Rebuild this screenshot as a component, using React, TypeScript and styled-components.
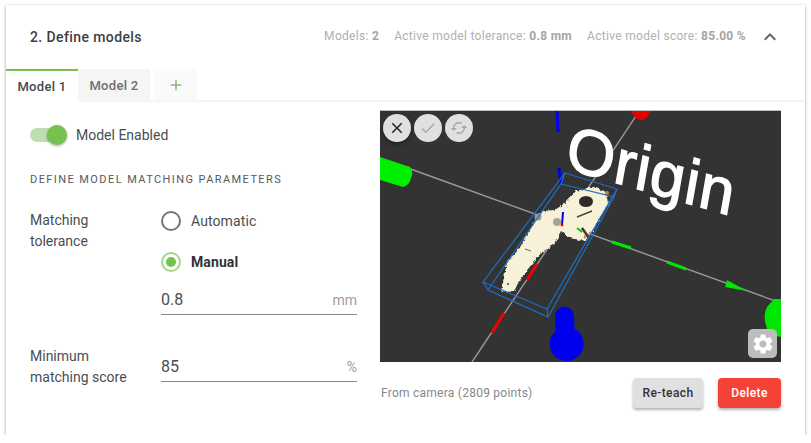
import * as React from 'react'
import styled, {createGlobalStyle} from 'styled-components'
import {MdAdd, MdCheck, MdClose, MdExpandLess, MdSettings, MdSync} from 'react-icons/md'

const GREEN = '#76c14f'

const GlobalStyle = createGlobalStyle`
  html, body {
    margin: 0;
    padding: 0;
    background: #fff;
    font-family: Roboto, "Liberation Sans", sans-serif;
  }
`

// Card and header
const Card = styled.div`
  box-sizing: border-box;
  width: 799px;
  height: 430px;
  margin: 5px 0 0 6px;
  background: #fff;
  box-shadow: 0 1px 3px rgba(0, 0, 0, 0.4);
  display: flex;
  flex-direction: column;
`

const Header = styled.header`
  height: 64px;
  flex: none;
  display: flex;
  align-items: flex-start;
  padding: 21px 23px 0 24px;
  box-sizing: border-box;
`

const Title = styled.h2`
  margin: 0;
  font-size: 14px;
  line-height: 23px;
  font-weight: 500;
  letter-spacing: 0.4px;
  color: #3c4043;
  flex: 1;
`

const Stats = styled.div`
  display: flex;
  gap: 15px;
  font-size: 12px;
  line-height: 20px;
  letter-spacing: 0.3px;
  color: #b0b0b0;
  margin-right: 12px;
`

const Stat = styled.span`
  & > b {
    font-weight: 700;
    color: #a5a5a5;
  }
`

const Chevron = styled(MdExpandLess)`
  width: 24px;
  height: 24px;
  color: #5f6368;
  margin-top: -1px;
`

// Tabs
const TabBar = styled.nav`
  height: 33px;
  flex: none;
  display: flex;
  box-sizing: border-box;
  border-bottom: 2px solid #f5f5f5;
`

const Tab = styled.div<{$active?: boolean}>`
  width: 72px;
  height: 33px;
  box-sizing: border-box;
  display: flex;
  align-items: center;
  justify-content: center;
  font-size: 13px;
  font-weight: 500;
  letter-spacing: 0.3px;
  color: ${({$active}) => ($active ? '#45494d' : '#6f6f6f')};
  background: ${({$active}) => ($active ? '#fff' : '#f5f5f5')};
  border-top: 2px solid ${({$active}) => ($active ? GREEN : '#f5f5f5')};
  position: relative;
  z-index: 1;
  & + & {
    height: 31px;
  }
`

const AddTab = styled.div`
  width: 43px;
  height: 31px;
  margin-left: 4px;
  background: #fafafa;
  display: flex;
  align-items: center;
  justify-content: center;
  color: #8db583;
  font-size: 18px;
`

// Body columns
const Body = styled.div`
  flex: 1;
  display: flex;
  padding: 8px 24px 0 24px;
`

const LeftColumn = styled.section`
  width: 327px;
  margin-right: 23px;
  display: flex;
  flex-direction: column;
`

const ToggleRow = styled.div`
  display: flex;
  align-items: center;
  gap: 9px;
  height: 32px;
  margin-top: 9px;
`

const Toggle = styled.div`
  width: 37px;
  height: 20px;
  position: relative;
  display: flex;
  align-items: center;
  &::before {
    content: '';
    width: 34px;
    height: 14px;
    border-radius: 7px;
    background: #bfe0ae;
  }
  &::after {
    content: '';
    position: absolute;
    right: 0;
    top: 0;
    width: 20px;
    height: 20px;
    border-radius: 50%;
    background: ${GREEN};
    box-shadow: 0 1px 3px rgba(0, 0, 0, 0.35);
  }
`

const BodyText = styled.span`
  font-size: 14px;
  line-height: 21px;
  color: #4a4e52;
`

const SectionTitle = styled.h3`
  margin: 21px 0 0;
  font-size: 11px;
  line-height: 16px;
  font-weight: 400;
  letter-spacing: 1.42px;
  text-transform: uppercase;
  color: #55595d;
`

const ParamGrid = styled.div`
  display: grid;
  grid-template-columns: 131px 196px;
  margin-top: 22px;
  row-gap: 31px;
`

const ParamLabel = styled(BodyText)`
  display: block;
`

const ParamControls = styled.div<{$top: number}>`
  display: flex;
  flex-direction: column;
  padding-top: ${({$top}) => $top}px;
`

const RadioRow = styled.label`
  display: flex;
  align-items: center;
  gap: 10px;
  height: 20px;
  margin-bottom: 21px;
`

const Radio = styled.span<{$checked?: boolean}>`
  width: 20px;
  height: 20px;
  box-sizing: border-box;
  border-radius: 50%;
  border: 2px solid ${({$checked}) => ($checked ? '#a5d58c' : '#757575')};
  display: flex;
  align-items: center;
  justify-content: center;
  &::after {
    content: '';
    width: 10px;
    height: 10px;
    border-radius: 50%;
    background: ${({$checked}) => ($checked ? GREEN : 'transparent')};
  }
`

const RadioText = styled.span<{$checked?: boolean}>`
  font-size: 14px;
  font-weight: ${({$checked}) => ($checked ? 700 : 400)};
  letter-spacing: 0.1px;
  color: ${({$checked}) => ($checked ? '#2f3235' : '#4a4e52')};
`

const Field = styled.div`
  height: 30px;
  box-sizing: border-box;
  border-bottom: 1px solid #8a8a8a;
  display: flex;
  align-items: center;
  justify-content: space-between;
  margin-top: -8px;
`

const FieldValue = styled.span`
  font-size: 16px;
  color: #4a4e52;
`

const FieldUnit = styled.span`
  font-size: 14px;
  color: #9e9e9e;
`

// Viewer
const RightColumn = styled.section`
  width: 401px;
  display: flex;
  flex-direction: column;
`

const Viewer = styled.div`
  position: relative;
  height: 252px;
  background: #333;
  border-top: 1px solid #bdbdbd;
  box-sizing: border-box;
`

const Scene = styled.svg`
  display: block;
  width: 401px;
  height: 251px;
`

const ViewerTools = styled.div`
  position: absolute;
  left: 3px;
  top: 3px;
  display: flex;
  gap: 3px;
`

const RoundTool = styled.span<{$disabled?: boolean}>`
  width: 28px;
  height: 28px;
  border-radius: 50%;
  background: #e0e0e0;
  display: flex;
  align-items: center;
  justify-content: center;
  color: ${({$disabled}) => ($disabled ? '#a8a8a8' : '#222')};
  font-size: 18px;
  box-shadow: ${({$disabled}) => ($disabled ? 'none' : '0 2px 5px rgba(0, 0, 0, 0.4)')};
`

const SyncIcon = styled(MdSync)`
  transform: rotate(90deg);
`

const SettingsButton = styled.span`
  position: absolute;
  right: 4px;
  bottom: 4px;
  width: 29px;
  height: 29px;
  border-radius: 5px;
  background: #bdbdbd;
  color: #fff;
  font-size: 24px;
  display: flex;
  align-items: center;
  justify-content: center;
`

const ViewerFooter = styled.div`
  display: flex;
  align-items: center;
  margin-top: 16px;
`

const Caption = styled.span`
  flex: 1;
  margin-left: 1px;
  font-size: 12px;
  letter-spacing: 0.25px;
  color: #85888b;
`

const ActionButton = styled.button<{$danger?: boolean}>`
  height: 30px;
  padding: 0;
  width: ${({$danger}) => ($danger ? '63px' : '70px')};
  margin-left: ${({$danger}) => ($danger ? '15px' : '0')};
  border: none;
  border-radius: 4px;
  font-family: inherit;
  font-size: 12px;
  font-weight: 500;
  letter-spacing: 0.4px;
  background: ${({$danger}) => ($danger ? '#f44336' : '#e0e0e0')};
  color: ${({$danger}) => ($danger ? '#fff' : '#333')};
  box-shadow: 0 2px 3px rgba(0, 0, 0, 0.3);
`

function SceneDrawing() {
  return (
    <Scene viewBox="380 111 401 251">
      <defs>
        <filter id="rough" x="-10%" y="-10%" width="120%" height="120%" colorInterpolationFilters="sRGB">
          <feTurbulence type="fractalNoise" baseFrequency="0.3" numOctaves="2" seed="4" result="noise" />
          <feDisplacementMap in="SourceGraphic" in2="noise" scale="4" xChannelSelector="R" yChannelSelector="G" />
          <feGaussianBlur stdDeviation="0.6" />
        </filter>
        <filter id="soft">
          <feGaussianBlur stdDeviation="0.7" />
        </filter>
      </defs>
      {/* axes */}
      <g stroke="#9a9a9a" strokeWidth="1.4" fill="none">
        <line x1="405" y1="167" x2="781" y2="303" />
        <line x1="640" y1="110" x2="472" y2="362" />
      </g>
      {/* green axis parts */}
      <path d="M380 157 L410 167 Q414 172 411 178 Q409 186 403 187 L380 180 Z" fill="#00ef00" />
      <path d="M612 242 L631 248 M667 262 L686 269" stroke="#00e600" strokeWidth="3" />
      <path d="M727 280 L747 291 L725 287 Z" fill="#00e600" />
      <path d="M774 299 L781 299 L781 337 L770 335 Q761 318 767 307 Z" fill="#00e600" />
      {/* red axis parts */}
      <path d="M631 110 L651 110 Q648 120 640 120 Q633 118 631 110 Z" fill="#e60000" />
      <path d="M537 264 L527 280 M504 313 L492 333" stroke="#f00000" strokeWidth="3" />
      {/* blue axis parts */}
      <path d="M557 110 L558 132 M559 168 L561 184" stroke="#0000ee" strokeWidth="3" />
      <path d="M555 316 A9.5 9.5 0 0 1 574 316 L575 340 L556 340 Z" fill="#0000ee" />
      <circle cx="566.7" cy="344" r="17" fill="#0000ee" />
      {/* point cloud */}
      <g filter="url(#rough)">
        <path
          d="M576 191 L593 187 L607 192 L609 203 L599 219 L591 234 L585 241 L570 238 L561 231 L554 244 L541 253 L528 269 L518 283 L514 292 L501 291 L504 278 L507 262 L519 249 L529 231 L536 218 L542 211 L555 210 L565 203 Z"
          fill="#f8f1da"
        />
        <path d="M604 190 L609 193 L607 198 Z" fill="#b08a50" />
        <path d="M584 238 L591 232" stroke="#c08a4a" strokeWidth="2" />
      </g>
      <g filter="url(#soft)">
        <ellipse cx="586" cy="201.5" rx="7" ry="5.5" fill="#2e2c28" />
        <path d="M577 217 L592 211" stroke="#4a4436" strokeWidth="1.5" />
        <path d="M582 228 L589 238" stroke="#4a3a22" strokeWidth="2.5" />
        <circle cx="557" cy="222" r="4" fill="#a8a494" />
        <circle cx="538" cy="217" r="3.5" fill="#8f9aa0" />
        <circle cx="508" cy="284" r="1" fill="#444" />
        <path d="M525 249 L531 251" stroke="#77735f" strokeWidth="1.2" />
      </g>
      <path d="M563 212 L562 225" stroke="#0000ee" strokeWidth="2" />
      <path d="M577 228 L582 232" stroke="#00d000" strokeWidth="2" />
      <circle cx="562" cy="225" r="1.4" fill="#e00000" />
      {/* bounding box */}
      <g stroke="#1f6fc0" strokeWidth="1.2" fill="none">
        <path d="M565 173 L617 189 L547 309 L483 282 Z" />
        <path d="M561 184 L614 197 L548 317 L488 290 Z" />
        <path d="M565 173 L561 184 M617 189 L614 197 M547 309 L548 317 M483 282 L488 290" />
      </g>
      {/* label sits over the axes */}
      <text
        transform="translate(564 168) rotate(16) skewX(6)"
        fill="#fff"
        stroke="#fff"
        strokeWidth="1.4"
        letterSpacing="1"
        fontFamily='"Liberation Sans", sans-serif'
        fontSize="63"
      >
        Origin
      </text>
    </Scene>
  )
}

export default function App() {
  return (
    <>
      <GlobalStyle />
      <Card>
        <Header>
          <Title>2. Define models</Title>
          <Stats>
            <Stat>
              Models: <b>2</b>
            </Stat>
            <Stat>
              Active model tolerance: <b>0.8 mm</b>
            </Stat>
            <Stat>
              Active model score: <b>85.00 %</b>
            </Stat>
          </Stats>
          <Chevron />
        </Header>
        <TabBar>
          <Tab $active>Model 1</Tab>
          <Tab>Model 2</Tab>
          <AddTab>
            <MdAdd />
          </AddTab>
        </TabBar>
        <Body>
          <LeftColumn>
            <ToggleRow>
              <Toggle />
              <BodyText>Model Enabled</BodyText>
            </ToggleRow>
            <SectionTitle>Define model matching parameters</SectionTitle>
            <ParamGrid>
              <ParamLabel>
                Matching
                <br />
                tolerance
              </ParamLabel>
              <ParamControls $top={1}>
                <RadioRow>
                  <Radio />
                  <RadioText>Automatic</RadioText>
                </RadioRow>
                <RadioRow>
                  <Radio $checked />
                  <RadioText $checked>Manual</RadioText>
                </RadioRow>
                <Field>
                  <FieldValue>0.8</FieldValue>
                  <FieldUnit>mm</FieldUnit>
                </Field>
              </ParamControls>
              <ParamLabel>
                Minimum
                <br />
                matching score
              </ParamLabel>
              <ParamControls $top={14}>
                <Field>
                  <FieldValue>85</FieldValue>
                  <FieldUnit>%</FieldUnit>
                </Field>
              </ParamControls>
            </ParamGrid>
          </LeftColumn>
          <RightColumn>
            <Viewer>
              <SceneDrawing />
              <ViewerTools>
                <RoundTool>
                  <MdClose />
                </RoundTool>
                <RoundTool $disabled>
                  <MdCheck />
                </RoundTool>
                <RoundTool $disabled>
                  <SyncIcon />
                </RoundTool>
              </ViewerTools>
              <SettingsButton>
                <MdSettings />
              </SettingsButton>
            </Viewer>
            <ViewerFooter>
              <Caption>From camera (2809 points)</Caption>
              <ActionButton>Re-teach</ActionButton>
              <ActionButton $danger>Delete</ActionButton>
            </ViewerFooter>
          </RightColumn>
        </Body>
      </Card>
    </>
  )
}
